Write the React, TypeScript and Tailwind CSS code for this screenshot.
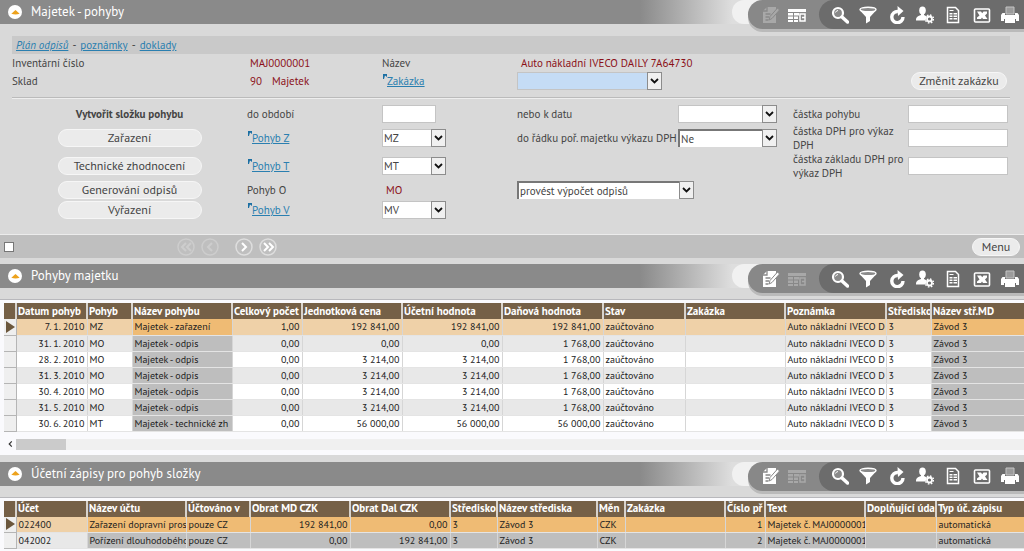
import type { ReactNode } from 'react';

type Column = {
  title: string;
  width: string;
  right?: boolean;
  marked?: boolean;
};

const ICONS: Record<string, ReactNode> = {
  edit: (
    <>
      <path d="M5 1h9v16H1V5z" />
      <path d="M1 5h4V1M3.500 8h5M3.500 11h3.500M3.500 14h3" fill="none" stroke="#888" strokeWidth="1.300" />
      <path d="m15.500 2 2 2-7.500 8.500-3 1.500 1-3.500z" stroke="#888" strokeWidth="1" />
    </>
  ),
  table: (
    <>
      <path d="M0 3h18v3H0zM0 7h5v2.500H0zM6 7h5v2.500H6zM0 10.500h5V13H0zM6 10.500h4V13H6zM0 14h5v2H0zM6 14h4v2H6z" />
      <path d="M12 8h5v7h-5zM14 11.500h3" fill="none" stroke="currentColor" strokeWidth="1.500" />
    </>
  ),
  search: (
    <>
      <circle cx="7" cy="7" r="5" fill="#8a8a8a" stroke="currentColor" strokeWidth="2.200" />
      <path d="M4.500 6.500a3 3 0 0 1 2.500-2" fill="none" stroke="currentColor" strokeWidth="1" />
      <path d="m11 11 5.500 5" fill="none" stroke="currentColor" strokeWidth="3.500" strokeLinecap="round" />
    </>
  ),
  filter: (
    <>
      <path d="M1 4.500 7 11v6.500l4-2.500v-4l6-6.500z" />
      <ellipse cx="9" cy="3.500" rx="8" ry="2.200" fill="#8a8a8a" stroke="currentColor" strokeWidth="1.400" />
    </>
  ),
  refresh: (
    <>
      <path d="M10 5.500A5.600 5.600 0 1 0 15 11" fill="none" stroke="currentColor" strokeWidth="3.400" />
      <path d="M9.500 0 15.500 5 10 10z" />
    </>
  ),
  user: (
    <>
      <ellipse cx="6.500" cy="4.500" rx="3.300" ry="4" />
      <path d="M5 7h3v2l3 1.500-1.500 4H0c0-3 1-4 5-5.500z" />
      <circle cx="13.500" cy="13" r="2.500" fill="none" stroke="currentColor" strokeWidth="1.800" />
      <circle cx="13.500" cy="13" r="4" fill="none" stroke="currentColor" strokeWidth="1.500" strokeDasharray="1.600 1.540" />
    </>
  ),
  report: (
    <>
      <path d="M3.500 1.500h8l3 3v12h-11z" fill="none" stroke="currentColor" strokeWidth="1.500" />
      <path d="M5.500 4h4v1h-4zM5.500 7h3v1.500h-3zM9.500 7h3.500v1.500H9.500zM5.500 9.500h3V11h-3zM9.500 9.500h3.500V11H9.500zM5.500 12h3v1.500h-3zM9.500 12h3.500v1.500H9.500z" />
    </>
  ),
  excel: (
    <>
      <rect x="1.500" y="3" width="15" height="13" rx="1" fill="none" stroke="currentColor" strokeWidth="1.600" />
      <path d="M4 5.500h4l1.200 1.800L10.500 5.500H14v2l-2 2 2.500 3.500H10l-1-1.500L8 13H4v-1.500l2.500-2z" />
    </>
  ),
  print: (
    <>
      <path d="M5 1h8v7H5z" fill="#9c9c9c" stroke="#c4c4c4" />
      <path d="M1.500 7H4v2h10V7h2.500L18 9v6h-3v-2H3v2H0V9z" />
      <path d="M4 13h10v4H4z" />
    </>
  ),
};

const Icon = ({ name }: { name: string }) => (
  <svg viewBox="0 0 18 18" className="size-[18px]" fill="currentColor" aria-hidden="true">
    {ICONS[name]}
  </svg>
);

const TOOLS = [
  { icon: 'search', label: 'Hledat' },
  { icon: 'filter', label: 'Filtr' },
  { icon: 'refresh', label: 'Obnovit' },
  { icon: 'user', label: 'Nastavení' },
  { icon: 'report', label: 'Sestava' },
  { icon: 'excel', label: 'Excel' },
  { icon: 'print', label: 'Tisk' },
];

const SectionHeader = ({ title, form = false }: { title: string; form?: boolean }) => (
  <header className="relative z-10 flex h-6 items-start bg-[#8a8a8a]">
    <div className="flex h-6 shrink-0 items-center gap-[9px] pl-2 text-white">
      <button aria-label="Sbalit" className="flex size-[14px] items-center justify-center rounded-full bg-white">
        <svg viewBox="0 0 10 6" className="h-[5px] w-[9px]" aria-hidden="true">
          <path d="M5 0 10 4.500Q5 6.500 0 4.500z" fill="#eda21c" />
        </svg>
      </button>
      <h2 className="text-[13px]">{title}</h2>
    </div>
    <div className="ml-auto h-6 w-[92px] bg-linear-to-r from-[#8a8a8a] to-[#dedede]" />
    <div className="flex h-6 shrink-0 bg-[#dedede]">
      <div className="-mr-8 h-6 w-12 rounded-l-full bg-[#f1f1f1]" />
      <div className="flex h-[29px] w-[276px] rounded-l-full bg-[#888] pl-[10px] shadow-[0_3px_0_#bababa]">
        <button
          aria-label="Upravit"
          className={`flex w-[26px] items-center justify-center ${form ? 'text-[#a8a8a8]' : 'text-white'}`}
        >
          <Icon name="edit" />
        </button>
        <button
          aria-label="Tabulka"
          className={`flex w-[26px] items-center justify-center ${form ? 'text-white' : 'text-[#a8a8a8]'}`}
        >
          <Icon name="table" />
        </button>
        <div className="ml-auto flex w-[205px] rounded-l-full bg-[#6c6c6c] pl-[7px] text-white">
          {TOOLS.map((t) => (
            <button key={t.icon} aria-label={t.label} className="flex flex-1 items-center justify-center">
              <Icon name={t.icon} />
            </button>
          ))}
        </div>
      </div>
    </div>
  </header>
);

const Select = ({
  label,
  value = '',
  className,
  boxed = false,
}: {
  label: string;
  value?: string;
  className: string;
  boxed?: boolean;
}) => (
  <div className={`relative h-[18px] ${className}`}>
    <select
      aria-label={label}
      defaultValue={value}
      className={`block size-full appearance-none pl-px leading-[14px] ${
        boxed ? 'border-t-2 border-l-2 border-[#777]' : 'border border-[#c4c4c4]'
      }`}
    >
      <option>{value}</option>
    </select>
    <span className="pointer-events-none absolute inset-y-0 right-0 flex w-[15px] items-center justify-center border border-[#8c8c8c] bg-[#f0f0f0]">
      <svg viewBox="0 0 9 6" className="h-[6px] w-[9px]" aria-hidden="true">
        <path d="m1 1 3.500 3.500L8 1" fill="none" stroke="#111" strokeWidth="1.800" />
      </svg>
    </span>
  </div>
);

const LookupLink = ({ children }: { children: ReactNode }) => (
  <a href="#" className="flex text-[#2a7fb0]">
    <svg viewBox="0 0 5 6" className="h-[6px] w-[5px]" aria-hidden="true">
      <path d="M1 6V1h4v3L3 2.500 2 6z" fill="#1b6fa3" />
    </svg>
    <span className="underline">{children}</span>
  </a>
);

const PillButton = ({ children, className }: { children: ReactNode; className: string }) => (
  <button className={`h-[18px] rounded-full border border-[#f6f6f6] bg-[#ebebeb] text-xs leading-4 text-[#444] ${className}`}>
    {children}
  </button>
);

const TextBox = ({ label, className }: { label: string; className: string }) => (
  <input aria-label={label} className={`h-[18px] border border-[#c4c4c4] bg-white px-1 ${className}`} />
);

const PagerButton = ({ label, path, disabled = false }: { label: string; path: string; disabled?: boolean }) => (
  <button aria-label={label} disabled={disabled} className={disabled ? 'text-[#cdcdcd]' : 'text-white'}>
    <svg viewBox="0 0 18 18" className="size-[18px]" fill="none" stroke="currentColor" aria-hidden="true">
      <circle cx="9" cy="9" r="8" stroke={disabled ? '#cdcdcd' : '#dedede'} strokeWidth="1.500" />
      <path d={path} strokeWidth="2" />
    </svg>
  </button>
);

const MovementForm = () => (
  <form className="pt-3 pr-[14px] pl-3 text-[11px] leading-4 text-[#444]">
    <nav className="flex h-[18px] items-center gap-1 bg-[#c9c9c9] px-1">
      <a href="#" className="text-[#2a7fb0] italic underline">Plán odpisů</a>-
      <a href="#" className="text-[#2a7fb0] underline">poznámky</a>-
      <a href="#" className="text-[#2a7fb0] underline">doklady</a>
    </nav>
    <div className="grid grid-cols-[238fr_132fr_135fr_493fr] grid-rows-[18px_18px] items-center border-b border-[#bbb] pb-[7px] shadow-[0_1px_0_#eee]">
      <span>Inventární číslo</span>
      <span className="text-[#8b1018]">MAJ0000001</span>
      <span>Název</span>
      <span className="pl-1 text-[#8b1018]">Auto nákladní IVECO DAILY 7A64730</span>
      <span>Sklad</span>
      <span className="flex gap-[10px] text-[#8b1018]">
        <span>90</span>
        <span>Majetek</span>
      </span>
      <LookupLink>Zakázka</LookupLink>
      <div className="flex items-center justify-between pr-[3px]">
        <Select label="Zakázka" className="w-[145px] bg-[#c5dcf5]" />
        <PillButton className="w-24">Změnit zakázku</PillButton>
      </div>
    </div>
    <div className="grid grid-cols-[minmax(0,235fr)_minmax(0,135fr)_minmax(0,135fr)_minmax(0,161fr)_minmax(0,115fr)_minmax(0,115fr)_minmax(0,102fr)] grid-rows-[22px_26px_29px_20px_20px] items-center pt-[5px] pb-[14px]">
      <strong className="text-center">Vytvořit složku pohybu</strong>
      <label htmlFor="period">do období</label>
      <input id="period" className="h-[18px] w-[54px] border border-[#c4c4c4] bg-white px-1" />
      <span>nebo k datu</span>
      <Select label="nebo k datu" className="w-[99px] bg-white" />
      <span>částka pohybu</span>
      <TextBox label="částka pohybu" className="w-[100px]" />

      <PillButton className="w-36 justify-self-center">Zařazení</PillButton>
      <LookupLink>Pohyb Z</LookupLink>
      <Select label="Pohyb Z" value="MZ" className="w-16 bg-white" />
      <span className="whitespace-nowrap">do řádku poř. majetku výkazu DPH</span>
      <Select label="do řádku poř. majetku výkazu DPH" value="Ne" boxed className="w-[99px] bg-white" />
      <span className="leading-[14px]">částka DPH pro výkaz DPH</span>
      <TextBox label="částka DPH pro výkaz DPH" className="w-[100px]" />

      <PillButton className="w-36 justify-self-center">Technické zhodnocení</PillButton>
      <LookupLink>Pohyb T</LookupLink>
      <Select label="Pohyb T" value="MT" className="w-16 bg-white" />
      <span className="col-span-2" />
      <span className="leading-[14px]">částka základu DPH pro výkaz DPH</span>
      <TextBox label="částka základu DPH pro výkaz DPH" className="w-[100px]" />

      <PillButton className="w-36 justify-self-center">Generování odpisů</PillButton>
      <span>Pohyb O</span>
      <span className="pl-1 text-[#8b1018]">MO</span>
      <Select label="Výpočet odpisů" value="provést výpočet odpisů" boxed className="w-[177px] bg-white" />
      <span className="col-span-3" />

      <PillButton className="w-36 justify-self-center">Vyřazení</PillButton>
      <LookupLink>Pohyb V</LookupLink>
      <Select label="Pohyb V" value="MV" className="w-16 bg-white" />
    </div>
  </form>
);

const DataTable = ({
  columns,
  rows,
  paleFirst = false,
}: {
  columns: Column[];
  rows: string[][];
  paleFirst?: boolean;
}) => {
  const cellColor = (row: number, col: number) => {
    const strong = paleFirst ? col > 0 : columns[col].marked;
    if (row === 0) return strong ? 'bg-[#efbb74]' : 'bg-[#efd1a8]';
    if (strong) return 'bg-[#bebebe]';
    return row % 2 ? 'bg-[#e8e8e8]' : 'bg-white';
  };

  return (
    <table className="w-full table-fixed border-collapse text-[10px] leading-[15px] text-[#222]">
      <colgroup>
        <col className="w-3" />
        {columns.map((c, i) => (
          <col key={i} className={c.width} />
        ))}
      </colgroup>
      <thead>
        <tr className="h-4 bg-[#756047] text-white">
          <th className="p-0" aria-label="Výběr" />
          {columns.map((c, i) => (
            <th key={i} className="overflow-hidden border-l-2 border-[#d8d3cc] p-0 pl-px text-left text-[11px] font-bold whitespace-nowrap">
              {c.title}
            </th>
          ))}
        </tr>
      </thead>
      <tbody>
        {rows.map((row, r) => (
          <tr key={r} className="h-4">
            <td className="border-r border-b border-[#b5b5b5] bg-[#efefef] p-0">
              {r === 0 && (
                <svg viewBox="0 0 9 12" className="ml-[2px] h-3 w-[9px]" aria-hidden="true">
                  <path d="M0 0 9 6 0 12z" fill="#6b573d" />
                </svg>
              )}
            </td>
            {row.map((cell, c) => (
              <td
                key={c}
                className={`overflow-hidden border-b border-l border-b-[#e4e4e4] border-l-[#d6d6d6] p-0 px-[2px] whitespace-nowrap ${
                  columns[c].right ? 'text-right' : ''
                } ${cellColor(r, c)}`}
              >
                {cell}
              </td>
            ))}
          </tr>
        ))}
      </tbody>
    </table>
  );
};

const MOVEMENT_COLUMNS: Column[] = [
  { title: 'Datum pohyb', width: 'w-[71px]', right: true },
  { title: 'Pohyb', width: 'w-[45px]' },
  { title: 'Název pohybu', width: 'w-[100px]', marked: true },
  { title: 'Celkový počet', width: 'w-[70px]', right: true },
  { title: 'Jednotková cena', width: 'w-[100px]', right: true },
  { title: 'Účetní hodnota', width: 'w-[100px]', right: true },
  { title: 'Daňová hodnota', width: 'w-[101px]', right: true },
  { title: 'Stav', width: 'w-[82px]' },
  { title: 'Zakázka', width: 'w-[100px]' },
  { title: 'Poznámka', width: 'w-[101px]' },
  { title: 'Středisko', width: 'w-[45px]' },
  { title: 'Název stř.MD', width: 'w-auto', marked: true },
];

const movement = (date: string, code: string, name: string, count: string, unit: string, book: string, tax: string) => [
  date, code, name, count, unit, book, tax, 'zaúčtováno', '', 'Auto nákladní IVECO D', '3', 'Závod 3',
];

const MOVEMENTS = [
  movement('7. 1. 2010', 'MZ', 'Majetek - zařazení', '1,00', '192 841,00', '192 841,00', '192 841,00'),
  movement('31. 1. 2010', 'MO', 'Majetek - odpis', '0,00', '0,00', '0,00', '1 768,00'),
  movement('28. 2. 2010', 'MO', 'Majetek - odpis', '0,00', '3 214,00', '3 214,00', '1 768,00'),
  movement('31. 3. 2010', 'MO', 'Majetek - odpis', '0,00', '3 214,00', '3 214,00', '1 768,00'),
  movement('30. 4. 2010', 'MO', 'Majetek - odpis', '0,00', '3 214,00', '3 214,00', '1 768,00'),
  movement('31. 5. 2010', 'MO', 'Majetek - odpis', '0,00', '3 214,00', '3 214,00', '1 768,00'),
  movement('30. 6. 2010', 'MT', 'Majetek - technické zh', '0,00', '56 000,00', '56 000,00', '56 000,00'),
];

const ENTRY_COLUMNS: Column[] = [
  { title: 'Účet', width: 'w-[71px]' },
  { title: 'Název účtu', width: 'w-[99px]' },
  { title: 'Účtováno v', width: 'w-[64px]' },
  { title: 'Obrat MD CZK', width: 'w-[100px]', right: true },
  { title: 'Obrat Dal CZK', width: 'w-[100px]', right: true },
  { title: 'Středisko', width: 'w-[47px]' },
  { title: 'Název střediska', width: 'w-[100px]' },
  { title: 'Měn', width: 'w-[28px]' },
  { title: 'Zakázka', width: 'w-[100px]' },
  { title: 'Číslo př', width: 'w-[40px]', right: true },
  { title: 'Text', width: 'w-[100px]' },
  { title: 'Doplňující úda', width: 'w-[71px]' },
  { title: 'Typ úč. zápisu', width: 'w-auto' },
];

const ENTRIES = [
  ['022400', 'Zařazení dopravní pros', 'pouze CZ', '192 841,00', '0,00', '3', 'Závod 3', 'CZK', '', '1', 'Majetek č. MAJ0000001', '', 'automatická'],
  ['042002', 'Pořízení dlouhodobého', 'pouze CZ', '0,00', '192 841,00', '3', 'Závod 3', 'CZK', '', '2', 'Majetek č. MAJ0000001', '', 'automatická'],
];

const App = () => {
  return (
    <main className="flex min-h-screen flex-col overflow-x-hidden bg-[#d9d9d9] font-['PT_Sans','Roboto_Condensed','Lato','Noto_Sans',sans-serif]">
      <section>
        <SectionHeader title="Majetek - pohyby" form />
        <MovementForm />
        <div className="flex h-6 items-center border-t border-[#ececec] bg-[#bfbfbf] pr-1 pl-1">
          <input type="checkbox" aria-label="Vybrat" className="size-[10px] appearance-none border border-[#777] bg-white" />
          <div className="ml-[163px] flex gap-[6px]">
            <PagerButton label="První" path="m9 5-4 4 4 4m5-8-4 4 4 4" disabled />
            <PagerButton label="Předchozí" path="m11 5-4 4 4 4" disabled />
          </div>
          <div className="ml-4 flex gap-[6px]">
            <PagerButton label="Další" path="m7 5 4 4-4 4" />
            <PagerButton label="Poslední" path="m5 5 4 4-4 4m5-8 4 4-4 4" />
          </div>
          <PillButton className="ml-auto w-12">Menu</PillButton>
        </div>
      </section>

      <section className="mt-[6px]">
        <SectionHeader title="Pohyby majetku" />
        <div className="mt-[11px] border-t border-[#b8b8bc] bg-[#fafafd] pt-[3px] pb-[5px] pl-1">
          <DataTable columns={MOVEMENT_COLUMNS} rows={MOVEMENTS} />
          <div className="mt-[7px] flex h-[11px] items-center">
            <button aria-label="Posunout vlevo" className="flex w-3 justify-center">
              <svg viewBox="0 0 5 7" className="h-[6px] w-[5px]" aria-hidden="true">
                <path d="M4 .5 1 3.500l3 3" fill="none" stroke="#333" strokeWidth="1.400" />
              </svg>
            </button>
            <div className="h-full flex-1 bg-[#f0f0f0]">
              <div className="h-full w-[50px] bg-[#cbcbcb]" />
            </div>
          </div>
        </div>
      </section>

      <section className="mt-[7px] flex flex-1 flex-col">
        <SectionHeader title="Účetní zápisy pro pohyb složky" />
        <div className="mt-[11px] flex-1 border-t border-[#b8b8bc] bg-[#fafafd] pt-[3px] pl-1">
          <DataTable columns={ENTRY_COLUMNS} rows={ENTRIES} paleFirst />
        </div>
      </section>
    </main>
  );
};

export default App;
